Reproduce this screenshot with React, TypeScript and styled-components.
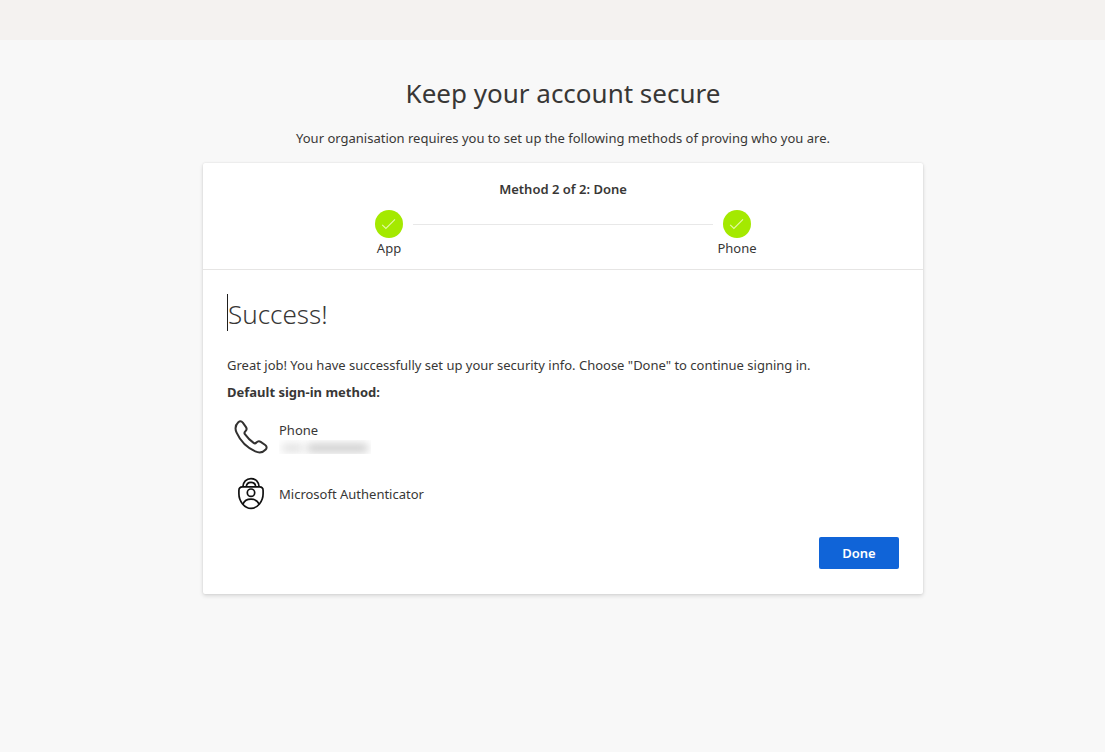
import React from "react";
import styled, { createGlobalStyle } from "styled-components";

const GlobalStyle = createGlobalStyle`
  *, *::before, *::after { box-sizing: border-box; }
  body {
    margin: 0;
    background: #f8f8f8;
    color: #383736;
    font-family: "Segoe UI", "Noto Sans", "Open Sans", sans-serif;
    font-size: 13px;
    line-height: 20px;
  }
  h1, h2, h3, p, ul, ol { margin: 0; padding: 0; }
`;

const Header = styled.header`
  height: 40px;
  background: #f4f2f0;
`;

const Main = styled.main`
  display: flex;
  flex-direction: column;
  align-items: center;
  padding: 32px 0 32px 21px;
`;

const Title = styled.h1`
  font-size: 26px;
  font-weight: 400;
  line-height: 42px;
  margin-bottom: 14px;
`;

const Intro = styled.p`
  margin-bottom: 15px;
`;

const Card = styled.section`
  width: 100%;
  max-width: 720px;
  background: #ffffff;
  border-radius: 2px;
  box-shadow: 0 2px 4px rgba(0, 0, 0, 0.13), 0 0 2px rgba(0, 0, 0, 0.11);
`;

const Progress = styled.div`
  display: flex;
  flex-direction: column;
  align-items: center;
  padding: 16px 24px 11px;
  border-bottom: 1px solid #e6e5e4;
`;

const ProgressTitle = styled.h3`
  font-size: 13px;
  font-weight: 600;
  line-height: 20px;
  margin-bottom: 11px;
`;

const Steps = styled.ol`
  display: flex;
  list-style: none;
  width: 100%;
  max-width: 396px;
  justify-content: space-between;
`;

const Step = styled.li`
  display: flex;
  flex-direction: column;
  align-items: center;
  width: 48px;
`;

const StepBadge = styled.span`
  display: flex;
  align-items: center;
  justify-content: center;
  width: 28px;
  height: 28px;
  border-radius: 50%;
  background: #a4e900;
`;

const Connector = styled.li`
  flex: 1;
  height: 1px;
  margin-top: 14px;
  background: #e8e8e8;
`;

const Body = styled.div`
  padding: 24px 24px 25px;
`;

const Heading = styled.h2`
  width: fit-content;
  border-left: 1px solid #201f1e;
  font-size: 26px;
  font-weight: 300;
  line-height: 33px;
  padding-top: 4px;
  margin-bottom: 24px;
`;

const Label = styled.p`
  font-weight: 700;
  margin: 7px 0;
`;

const MethodList = styled.ul`
  list-style: none;
`;

const Method = styled.li`
  display: flex;
  align-items: center;
  height: 56px;
  gap: 4px;
  margin-bottom: 1px;
`;

const MethodIcon = styled.span`
  display: flex;
  justify-content: center;
  width: 48px;
`;

const Redacted = styled.div`
  width: 92px;
  height: 14px;
  display: flex;
  align-items: flex-end;
  gap: 4px;
  padding: 0 3px 2px;
  overflow: hidden;
`;

const Smudge = styled.span<{ $grow: number; $shade: string }>`
  flex: ${(p) => p.$grow};
  height: 8px;
  border-radius: 3px;
  background: ${(p) => p.$shade};
  filter: blur(4px);
`;

const Actions = styled.div`
  display: flex;
  justify-content: flex-end;
  margin-top: 15px;
`;

const PrimaryButton = styled.button`
  min-width: 80px;
  height: 32px;
  border: 0;
  border-radius: 2px;
  background: #1064d8;
  color: #ffffff;
  font: inherit;
  font-weight: 600;
  cursor: pointer;
`;

const CheckIcon = () => (
  <svg width="16" height="16" viewBox="0 0 16 16" fill="none" aria-hidden="true">
    <path d="M1.2 8.8 4.9 12.5 14 3.4" stroke="#e6f8a8" strokeWidth="1.1" />
  </svg>
);

const PhoneIcon = () => (
  <svg width="34" height="34" viewBox="0 0 34 34" fill="none" aria-hidden="true">
    <path
      d="M4.3 2.2C5.8 1 7.6 1.2 8.8 2.6L12 7.1C13 8.7 12.7 10.1 11.4 11.2C10.3 12.2 10.1 13 10.9 14.1C13.1 17.2 16.3 20.5 19.6 22.9C20.7 23.7 21.5 23.5 22.4 22.5C23.7 21.2 25.2 20.9 26.7 21.9L31.2 25C32.9 26.3 33 28.1 31.7 29.5C29.1 32.4 25.5 33.2 21.3 31.4C13.1 27.8 6.2 20.7 2.6 12.7C.8 8.6 1.5 4.8 4.3 2.2Z"
      stroke="#323130"
      strokeWidth="2"
      strokeLinejoin="round"
    />
  </svg>
);

const AuthenticatorIcon = () => (
  <svg width="28" height="34" viewBox="0 0 28 34" fill="none" stroke="#111111" strokeWidth="1.7" aria-hidden="true">
    <path d="M5.9 9.8C6.1 5 9.3 1.6 14 1.6S21.9 5 22.1 9.8" />
    <path d="M9.3 9.8C9.5 6.9 11.3 5.3 14 5.3S18.5 6.9 18.7 9.8" />
    <path
      d="M14 9.9H5.4C3.1 9.9 1.9 11.2 1.9 13.6V16.8C1.9 24.4 7.6 31.4 14 31.4S26.1 24.4 26.1 16.8V13.6C26.1 11.2 24.9 9.9 22.6 9.9Z"
      strokeLinejoin="round"
    />
    <circle cx="14" cy="15.7" r="3.7" />
    <path d="M6 27C7.3 23.9 10.2 22.2 14 22.2S20.7 23.9 22 27" />
  </svg>
);

export default function App() {
  return (
    <>
      <GlobalStyle />
      <Header />
      <Main>
        <Title>Keep your account secure</Title>
        <Intro>Your organisation requires you to set up the following methods of proving who you are.</Intro>
        <Card>
          <Progress>
            <ProgressTitle>Method 2 of 2: Done</ProgressTitle>
            <Steps>
              <Step>
                <StepBadge><CheckIcon /></StepBadge>
                App
              </Step>
              <Connector aria-hidden="true" />
              <Step>
                <StepBadge><CheckIcon /></StepBadge>
                Phone
              </Step>
            </Steps>
          </Progress>
          <Body>
            <Heading>Success!</Heading>
            <p>Great job! You have successfully set up your security info. Choose "Done" to continue signing in.</p>
            <Label>Default sign-in method:</Label>
            <MethodList>
              <Method>
                <MethodIcon><PhoneIcon /></MethodIcon>
                <div>
                  Phone
                  <Redacted aria-label="Phone number hidden">
                    <Smudge $grow={1} $shade="#dedede" />
                    <Smudge $grow={3} $shade="#c8c8c8" />
                  </Redacted>
                </div>
              </Method>
              <Method>
                <MethodIcon><AuthenticatorIcon /></MethodIcon>
                Microsoft Authenticator
              </Method>
            </MethodList>
            <Actions>
              <PrimaryButton type="button">Done</PrimaryButton>
            </Actions>
          </Body>
        </Card>
      </Main>
    </>
  );
}
